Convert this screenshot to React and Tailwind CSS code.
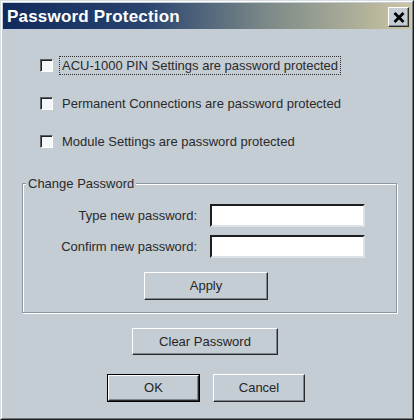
const font = { fontFamily: '"Liberation Sans", Arial, sans-serif' };

const raised = "bg-[#c4ccd4] border border-t-white border-l-white border-r-[#2a2a2a] border-b-[#2a2a2a] shadow-[inset_-1px_-1px_0_#7f8890]";

function Checkbox() {
  return (
    <span className="w-[13px] h-[13px] shrink-0 bg-[#f4f6f8] border border-t-[#5a6068] border-l-[#5a6068] border-r-white border-b-white shadow-[inset_1px_1px_0_#222]" />
  );
}

function CheckRow({ label, focused }) {
  return (
    <div className="flex items-center h-[21px]">
      <Checkbox />
      <span className={`ml-[7px] px-[2px] py-[1px] leading-[15px] ${focused ? "outline outline-1 outline-dotted outline-[#333]" : ""}`}>{label}</span>
    </div>
  );
}

function Btn({ children, className = "", isDefault }) {
  const b = <button className={`${raised} h-full w-full text-[13px] text-[#262626]`} style={font}>{children}</button>;
  return isDefault
    ? <div className={`border border-black ${className}`}>{b}</div>
    : <div className={className}>{b}</div>;
}

function PwRow({ label, className = "" }) {
  return (
    <div className={`flex items-center ${className}`}>
      <span className="w-[174px] text-right leading-[15px]">{label}</span>
      <input type="password" className="ml-[13px] w-[155px] h-[23px] bg-white border-2 border-t-[#1e1e1e] border-l-[#1e1e1e] border-r-[#dde2e7] border-b-[#dde2e7] outline-none" />
    </div>
  );
}

export default function App() {
  return (
    <div className="w-[414px] h-[420px] bg-[#c4ccd4] border border-t-[#d8dde2] border-l-[#d8dde2] border-r-[#1c1c1c] border-b-[#1c1c1c] text-[13px] text-[#2a2a2a]" style={font}>
      <div className="h-full border border-t-white border-l-white border-r-[#6f7780] border-b-[#6f7780] p-[1px] flex flex-col">
        {/* title bar */}
        <div className="h-[26px] flex items-center justify-between pl-[4px] pr-[2px] bg-[linear-gradient(to_right,#102a5c_0%,#2a4470_35%,#7d8a88_65%,#cbc5a3_100%)]">
          <span className="text-white font-bold text-[17px] leading-none tracking-[0.2px]">Password Protection</span>
          <span className={`${raised} w-[21px] h-[20px] flex items-center justify-center mt-[2px]`}>
            <svg width="12" height="11" viewBox="0 0 12 11">
              <path d="M1.5 1 L10.5 10 M10.5 1 L1.5 10" stroke="#000" strokeWidth="2.8" />
            </svg>
          </span>
        </div>

        {/* checkboxes */}
        <div className="pl-[37px] mt-[26px] flex flex-col gap-[17px]">
          <CheckRow label="ACU-1000 PIN Settings are password protected" focused />
          <CheckRow label="Permanent Connections are password protected" />
          <CheckRow label="Module Settings are password protected" />
        </div>

        {/* group box */}
        <div className="relative ml-[19px] mt-[31px] w-[375px] border border-[#8d97a1] shadow-[1px_1px_0_#fff,inset_1px_1px_0_#fff] pt-[20px] pb-[12px]">
          <span className="absolute -top-[8px] left-[3px] px-[2px] bg-[#c4ccd4] leading-[15px]">Change Password</span>
          <PwRow label="Type new password:" />
          <PwRow label="Confirm new password:" className="mt-[8px]" />
          <Btn className="ml-[121px] mt-[14px] w-[124px] h-[28px]">Apply</Btn>
        </div>

        <Btn className="ml-[129px] mt-[15px] w-[146px] h-[27px]">Clear Password</Btn>

        <div className="flex ml-[104px] mt-[19px] gap-[13px]">
          <Btn isDefault className="w-[93px] h-[28px]">OK</Btn>
          <Btn className="w-[92px] h-[28px]">Cancel</Btn>
        </div>
      </div>
    </div>
  );
}
